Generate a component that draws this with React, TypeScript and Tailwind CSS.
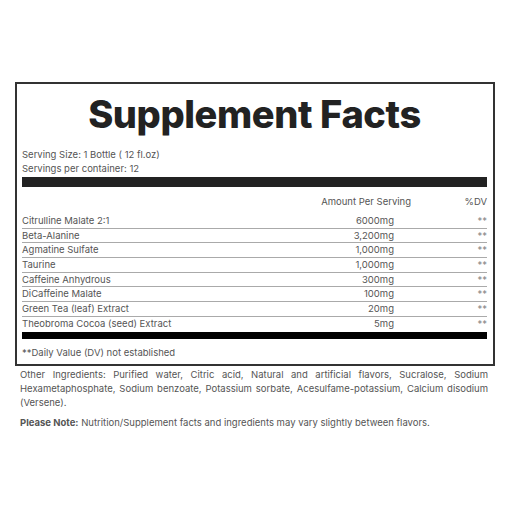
const rows = [
  { name: "Citrulline Malate 2:1", amount: "6000mg" },
  { name: "Beta-Alanine", amount: "3,200mg" },
  { name: "Agmatine Sulfate", amount: "1,000mg" },
  { name: "Taurine", amount: "1,000mg" },
  { name: "Caffeine Anhydrous", amount: "300mg" },
  { name: "DiCaffeine Malate", amount: "100mg" },
  { name: "Green Tea (leaf) Extract", amount: "20mg" },
  { name: "Theobroma Cocoa (seed) Extract", amount: "5mg" },
];

export default function App() {
  return (
    <div
      className="w-[510px] h-[510px] bg-white pt-[82px] text-[#555] text-[9.5px]"
      style={{ fontFamily: "Inter, 'Liberation Sans', sans-serif" }}
    >
      <div className="mx-[15px] border-2 border-[#333] pl-[5px] pr-[6px] pb-[4px]">
        <h1 className="mt-[11px] text-center text-[38px] leading-[38px] font-extrabold text-[#222] tracking-[-0.4px]">
          Supplement Facts
        </h1>
        <div className="mt-[15px] leading-[14px]">
          <div>Serving Size: 1 Bottle ( 12 fl.oz)</div>
          <div>Servings per container: 12</div>
        </div>
        <div className="mt-[1px] h-[10px] bg-[#222]" />
        <div className="mt-[8px] flex leading-[14px]">
          <div className="flex-1" />
          <div className="w-[110px] text-right">Amount Per Serving</div>
          <div className="w-[76px] text-right">%DV</div>
        </div>
        <div className="mt-[5px]">
          {rows.map((r, i) => (
            <div
              key={r.name}
              className={
                i < rows.length - 1
                  ? "flex h-[14.67px] leading-[13.67px] border-b border-[#aaa]"
                  : "flex h-[14.67px] leading-[13.67px]"
              }
            >
              <div className="flex-1">{r.name}</div>
              <div className="w-[110px] text-right pr-[17px]">{r.amount}</div>
              <div className="w-[76px] text-right text-[#888]">**</div>
            </div>
          ))}
        </div>
        <div className="mt-[1px] h-[7px] bg-black" />
        <div className="mt-[7px] leading-[14px]">**Daily Value (DV) not established</div>
      </div>
      <p className="mt-[2px] ml-[20px] mr-[22px] leading-[14px] text-justify">
        Other Ingredients: Purified water, Citric acid, Natural and artificial flavors, Sucralose, Sodium
        Hexametaphosphate, Sodium benzoate, Potassium sorbate, Acesulfame-potassium, Calcium disodium
        (Versene).
      </p>
      <p className="mt-[6px] ml-[20px] mr-[22px] leading-[14px]">
        <span className="font-bold">Please Note:</span> Nutrition/Supplement facts and ingredients may
        vary slightly between flavors.
      </p>
    </div>
  );
}
